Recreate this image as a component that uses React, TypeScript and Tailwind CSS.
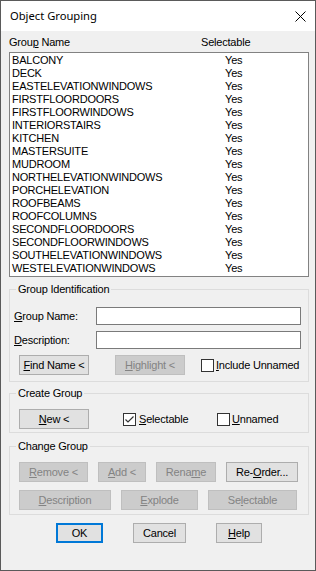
import React from "react";

const rows = [
  "BALCONY",
  "DECK",
  "EASTELEVATIONWINDOWS",
  "FIRSTFLOORDOORS",
  "FIRSTFLOORWINDOWS",
  "INTERIORSTAIRS",
  "KITCHEN",
  "MASTERSUITE",
  "MUDROOM",
  "NORTHELEVATIONWINDOWS",
  "PORCHELEVATION",
  "ROOFBEAMS",
  "ROOFCOLUMNS",
  "SECONDFLOORDOORS",
  "SECONDFLOORWINDOWS",
  "SOUTHELEVATIONWINDOWS",
  "WESTELEVATIONWINDOWS",
];

function Btn({
  children,
  className,
  disabled,
}: {
  children: React.ReactNode;
  className: string;
  disabled?: boolean;
}) {
  return (
    <div
      className={
        "h-[20px] flex items-center justify-center border " +
        (disabled
          ? "bg-[#cccccc] border-[#bfbfbf] text-[#838383] "
          : "bg-[#e1e1e1] border-[#adadad] text-black ") +
        className
      }
    >
      <span>{children}</span>
    </div>
  );
}

function Check({ checked }: { checked?: boolean }) {
  return (
    <div className="w-[13px] h-[13px] border border-[#333333] bg-white flex items-center justify-center shrink-0">
      {checked && (
        <svg width="11" height="11" viewBox="0 0 11 11">
          <path d="M1.5 5.5 L4 8 L9.5 2.5" fill="none" stroke="#333333" strokeWidth="1.2" />
        </svg>
      )}
    </div>
  );
}

function Group({
  title,
  className,
  children,
}: {
  title: string;
  className: string;
  children: React.ReactNode;
}) {
  return (
    <fieldset className={"border border-[#dcdcdc] m-0 p-0 min-w-0 " + className}>
      <legend className="ml-[6px] px-[2px] h-[13px] leading-[13px]">{title}</legend>
      {children}
    </fieldset>
  );
}

export default function App() {
  return (
    <div className="w-[316px] h-[571px] border border-[#5a5a5a] bg-[#f0f0f0] flex flex-col font-['Liberation_Sans',Arial,sans-serif] text-[11px] leading-[13px] tracking-[-0.2px] text-black overflow-hidden">
      <div className="h-[30px] shrink-0 bg-white flex items-center justify-between pl-[9px] pr-[9px]">
        <span className="font-['Noto_Sans',sans-serif] text-[11.2px] leading-[16px] tracking-normal">Object Grouping</span>
        <svg width="11" height="11" viewBox="0 0 11 11">
          <path d="M0.5 0.5 L10.5 10.5 M10.5 0.5 L0.5 10.5" stroke="#000" strokeWidth="1" />
        </svg>
      </div>
      <div className="flex flex-col pl-[8px] pr-[6px]">
        <div className="flex mt-[5px] h-[13px]">
          <span className="w-[192px]">
            Grou<u>p</u> Name
          </span>
          <span>Selectable</span>
        </div>
        <div className="mt-[3px] h-[225px] border border-[#828282] bg-white pt-[1px] pl-[2px]">
          {rows.map((r) => (
            <div key={r} className="flex h-[13px]">
              <span className="w-[213px]">{r}</span>
              <span>Yes</span>
            </div>
          ))}
        </div>

        <Group title="Group Identification" className="mt-[6px] pb-[6px]">
          <div className="flex items-center mt-[11px] h-[18px]">
            <span className="ml-[4px] w-[82px] leading-[12px]">
              <u>G</u>roup Name:
            </span>
            <div className="w-[205px] h-[18px] border border-[#7a7a7a] bg-white" />
          </div>
          <div className="flex items-center mt-[6px] h-[18px]">
            <span className="ml-[4px] w-[82px] leading-[12px]">
              <u>D</u>escription:
            </span>
            <div className="w-[205px] h-[18px] border border-[#7a7a7a] bg-white" />
          </div>
          <div className="flex items-center mt-[6px]">
            <Btn className="ml-[9px] w-[70px]">
              <u>F</u>ind Name &lt;
            </Btn>
            <Btn className="ml-[26px] w-[70px]" disabled>
              <u>H</u>ighlight &lt;
            </Btn>
            <div className="ml-[16px] flex items-center">
              <Check />
              <span className="ml-[2px]">
                <u>I</u>nclude Unnamed
              </span>
            </div>
          </div>
        </Group>

        <Group title="Create Group" className="mt-[5px] pb-[3px]">
          <div className="flex items-center mt-[9px]">
            <Btn className="ml-[9px] w-[70px]">
              <u>N</u>ew &lt;
            </Btn>
            <div className="ml-[34px] w-[94px] flex items-center">
              <Check checked />
              <span className="ml-[3px]">
                <u>S</u>electable
              </span>
            </div>
            <div className="flex items-center">
              <Check />
              <span className="ml-[2px]">
                <u>U</u>nnamed
              </span>
            </div>
          </div>
        </Group>

        <Group title="Change Group" className="mt-[7px] pb-[4px]">
          <div className="flex items-center mt-[9px] pl-[9px] gap-[10px]">
            <Btn className="w-[69px]" disabled>
              <u>R</u>emove &lt;
            </Btn>
            <Btn className="w-[48px]" disabled>
              <u>A</u>dd &lt;
            </Btn>
            <Btn className="w-[60px]" disabled>
              Rena<u>m</u>e
            </Btn>
            <Btn className="w-[72px]">
              Re-<u>O</u>rder...
            </Btn>
          </div>
          <div className="flex items-center mt-[8px] pl-[9px] gap-[10px]">
            <Btn className="w-[92px]" disabled>
              <u>D</u>escription
            </Btn>
            <Btn className="w-[77px]" disabled>
              <u>E</u>xplode
            </Btn>
            <Btn className="w-[89px]" disabled>
              Se<u>l</u>ectable
            </Btn>
          </div>
        </Group>

        <div className="flex items-center mt-[8px]">
          <div className="ml-[47px] w-[47px] h-[20px] border-2 border-[#0078d7] bg-[#e1e1e1] flex items-center justify-center">
            OK
          </div>
          <Btn className="ml-[30px] w-[53px]">Cancel</Btn>
          <Btn className="ml-[30px] w-[46px]">
            <u>H</u>elp
          </Btn>
        </div>
      </div>
    </div>
  );
}
